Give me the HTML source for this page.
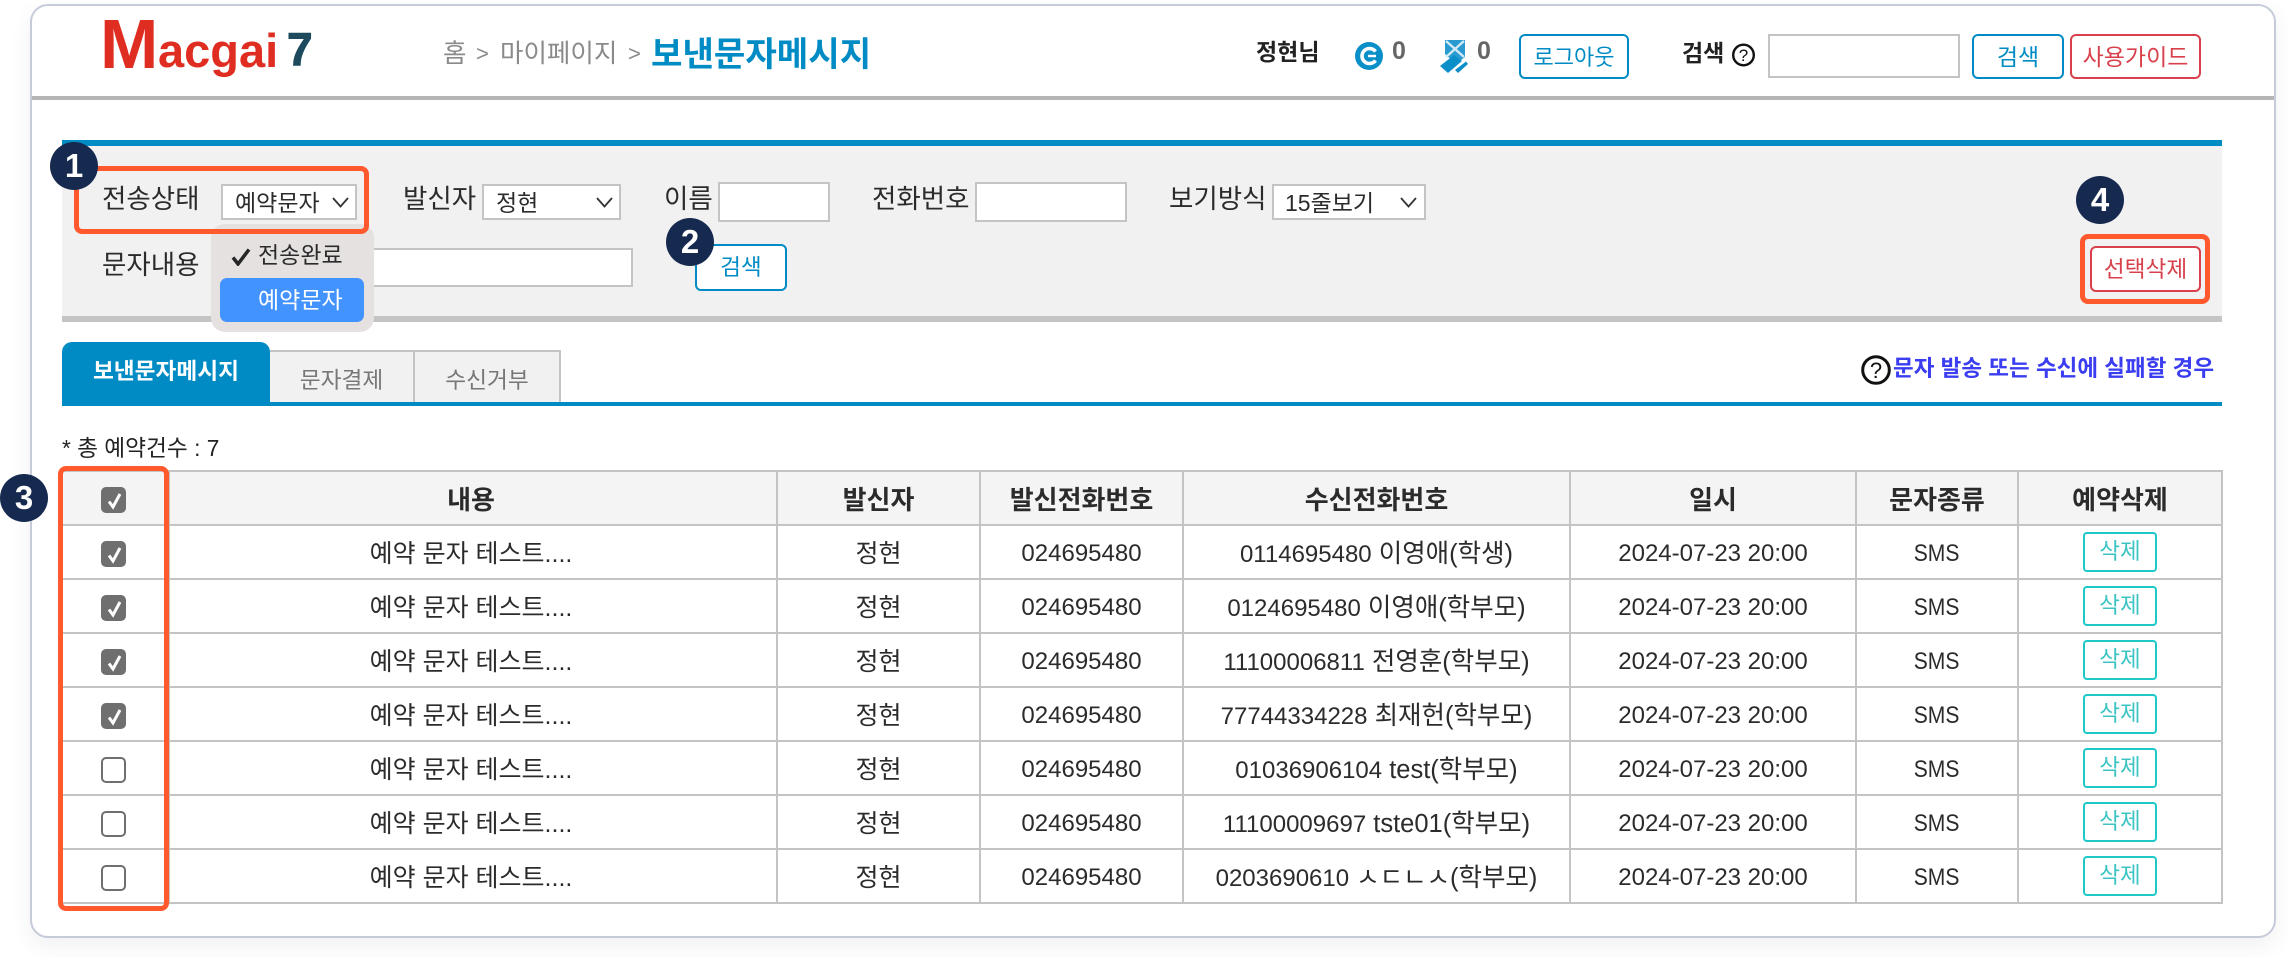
<!DOCTYPE html>
<html lang="ko">
<head>
<meta charset="utf-8">
<title>보낸문자메시지</title>
<style>
html,body{margin:0;padding:0;background:#fff;width:2288px;height:958px;overflow:hidden}
body{position:relative;font-family:"Liberation Sans","Noto Sans CJK KR",sans-serif;color:#2b2b2b}
.a{position:absolute;white-space:nowrap}
.t{position:absolute;white-space:nowrap;line-height:40px;height:40px}
.card{position:absolute;left:30px;top:4px;width:2242px;height:930px;border:2px solid #c6cbd9;border-radius:18px;background:#fff;box-shadow:0 8px 22px rgba(40,50,80,.07)}
.inp,.sel{position:absolute;box-sizing:border-box;background:#fff;border:2px solid #c4c4c4}
.btn{position:absolute;box-sizing:border-box;background:#fff;border-radius:6px;text-align:center;white-space:nowrap}
.bl{border:2px solid #008bc4;color:#008bc4}
.rd{border:2px solid #d8404c;color:#d8404c}
.o{position:absolute;box-sizing:border-box;border:5px solid #ff592d;border-radius:8px}
.badge{position:absolute;width:48px;height:48px;border-radius:50%;background:#152a4e;color:#fff;text-align:center;font-weight:700;font-size:33px;line-height:48px}
table{position:absolute;left:61px;top:470px;width:2160px;height:432px;border-collapse:collapse;table-layout:fixed;font-size:25px}
tr{height:54px}
td,th{box-sizing:border-box;border:2px solid #c4c4c4;padding:4px 0 0;text-align:center;height:54px;line-height:34px;white-space:nowrap;overflow:hidden}
th{background:#f4f4f4;font-weight:700;color:#2b2b2b;font-size:26px}
td.m,th.m{padding-right:4px}
td.d,td.s{padding-top:3px}
td.c{padding-top:5px}
td.d{font-size:24px}
td.s span{display:inline-block;font-size:24.500px;transform:scaleX(.86)}
td.c{font-size:25.500px}
td.c span{font-size:24px}
td.n{font-size:25px}
.cb{display:block;position:relative;top:0;left:-2px;box-sizing:border-box;width:25px;height:26px;margin:0 auto;border:2px solid #6f6f6f;border-radius:5px;background:#fff}
.cb.on{background:#6f6f6f}
.cb svg{display:block;margin:1px 0 0 1px}
.del{display:block;box-sizing:border-box;width:74px;height:40px;margin:-4px auto 0;border:2px solid #1cc8c8;border-radius:4px;color:#3cc4c4;font-size:22.500px;line-height:35px;background:#fff}
</style>
</head>
<body>
<div class="card"></div>
<div class="a" style="left:32px;top:96px;width:2242px;height:4px;background:#b5b5b5"></div>

<!-- logo -->
<div class="a" style="left:100px;top:4px;font-size:70px;line-height:80px;font-weight:700;color:#e02d21">M</div>
<div class="a" style="left:158px;top:21px;font-size:47px;line-height:60px;font-weight:700;color:#e02d21">acgai</div>
<div class="a" style="left:287px;top:19px;font-size:46px;line-height:60px;font-weight:700;color:#1d4a5c;-webkit-text-stroke:1px #1d4a5c">7</div>

<!-- breadcrumb -->
<div class="t" style="left:443px;top:34px;font-size:25.500px;color:#8a8a8a">홈</div>
<div class="t" style="left:476px;top:34px;font-size:22px;color:#8a8a8a">&gt;</div>
<div class="t" style="left:500px;top:34px;font-size:25.500px;color:#8a8a8a">마이페이지</div>
<div class="t" style="left:628px;top:34px;font-size:22px;color:#8a8a8a">&gt;</div>
<div class="t" style="left:651px;top:35px;font-size:34.200px;font-weight:700;color:#008bc4">보낸문자메시지</div>

<!-- header right -->
<div class="t" style="left:1256px;top:32px;font-size:23px;font-weight:700;color:#222">정현님</div>
<svg class="a" style="left:1355px;top:42px" width="28" height="28" viewBox="0 0 28 28"><circle cx="14" cy="14" r="14" fill="#0a8fc8"/><path d="M20.500 9.500A7.500 7.500 0 1 0 20.500 18.500" fill="none" stroke="#fff" stroke-width="3.600"/><path d="M13 14H21" stroke="#fff" stroke-width="2.400"/></svg>
<div class="t" style="left:1392px;top:31px;font-size:25px;font-weight:700;color:#666">0</div>
<svg class="a" style="left:1440px;top:40px" width="28" height="33" viewBox="0 0 28 33"><path d="M5 0H25V17L16 24L5 14Z" fill="#2a9bd0"/><path d="M6 1L24 17M24 1L6 17" stroke="#cfe9f5" stroke-width="2.400"/><path d="M0 26L14 15L22 21L8 33Z" fill="#0a8fc8"/><path d="M15 30L26 21.500L28 24L18 33Z" fill="#0a8fc8"/></svg>
<div class="t" style="left:1477px;top:31px;font-size:25px;font-weight:700;color:#666">0</div>
<div class="btn bl" style="left:1519px;top:34px;width:110px;height:45px;font-size:22px;line-height:43px">로그아웃</div>
<div class="t" style="left:1682px;top:33px;font-size:23px;font-weight:700;color:#222">검색</div>
<svg class="a" style="left:1732px;top:43px" width="23" height="24" viewBox="0 0 23 24"><circle cx="11.500" cy="12" r="10.300" fill="none" stroke="#111" stroke-width="2.400"/><text x="11.500" y="18" text-anchor="middle" font-size="17" font-family="Liberation Sans" fill="#111">?</text></svg>
<div class="inp" style="left:1768px;top:34px;width:192px;height:44px"></div>
<div class="btn bl" style="left:1972px;top:34px;width:92px;height:45px;font-size:23px;line-height:43px">검색</div>
<div class="btn rd" style="left:2070px;top:34px;width:131px;height:45px;font-size:23px;line-height:43px">사용가이드</div>

<!-- search panel -->
<div class="a" style="left:62px;top:140px;width:2160px;height:6px;background:#008bc4"></div>
<div class="a" style="left:62px;top:146px;width:2160px;height:170px;background:#f1f1f1"></div>
<div class="a" style="left:62px;top:316px;width:2160px;height:6px;background:#c4c4c4"></div>

<div class="t" style="left:102px;top:179px;font-size:26.500px">전송상태</div>
<div class="sel" style="left:221px;top:184px;width:136px;height:36px"></div>
<div class="t" style="left:235px;top:183px;font-size:23px">예약문자</div>
<svg class="a" style="left:332px;top:197px" width="17" height="11" viewBox="0 0 17 11"><path d="M1 1L8.500 9.500L16 1" fill="none" stroke="#333" stroke-width="1.800"/></svg>

<div class="t" style="left:403px;top:179px;font-size:26.500px">발신자</div>
<div class="sel" style="left:482px;top:184px;width:139px;height:36px"></div>
<div class="t" style="left:496px;top:183px;font-size:23px">정현</div>
<svg class="a" style="left:596px;top:197px" width="17" height="11" viewBox="0 0 17 11"><path d="M1 1L8.500 9.500L16 1" fill="none" stroke="#333" stroke-width="1.800"/></svg>

<div class="t" style="left:664px;top:179px;font-size:26.500px">이름</div>
<div class="inp" style="left:718px;top:182px;width:112px;height:40px"></div>

<div class="t" style="left:872px;top:179px;font-size:26.500px">전화번호</div>
<div class="inp" style="left:975px;top:182px;width:152px;height:40px"></div>

<div class="t" style="left:1169px;top:179px;font-size:26.500px">보기방식</div>
<div class="sel" style="left:1272px;top:184px;width:154px;height:36px"></div>
<div class="t" style="left:1285px;top:183px;font-size:23px">15줄보기</div>
<svg class="a" style="left:1400px;top:197px" width="17" height="11" viewBox="0 0 17 11"><path d="M1 1L8.500 9.500L16 1" fill="none" stroke="#333" stroke-width="1.800"/></svg>

<div class="t" style="left:102px;top:245px;font-size:26.500px">문자내용</div>
<div class="inp" style="left:221px;top:248px;width:412px;height:39px"></div>

<!-- dropdown -->
<div class="a" style="left:211px;top:224px;width:163px;height:108px;background:#e6e1e1;border-radius:14px"></div>
<div class="a" style="left:220px;top:278px;width:144px;height:44px;background:#4393ff;border-radius:7px"></div>
<svg class="a" style="left:231px;top:248px" width="20" height="18" viewBox="0 0 20 18"><path d="M2 9.500L7 16L18 1.500" fill="none" stroke="#262626" stroke-width="3.500"/></svg>
<div class="t" style="left:258px;top:235px;font-size:23px">전송완료</div>
<div class="t" style="left:258px;top:280px;font-size:23px;color:#fff">예약문자</div>

<div class="btn bl" style="left:695px;top:244px;width:92px;height:47px;font-size:22.500px;line-height:43px">검색</div>
<div class="btn rd" style="left:2090px;top:246px;width:111px;height:46px;font-size:22.700px;line-height:42px">선택삭제</div>

<!-- tabs -->
<div class="a" style="left:62px;top:402px;width:2160px;height:4px;background:#008bc4"></div>
<div class="a" style="left:62px;top:342px;width:208px;height:62px;background:#008bc4;border-radius:10px 10px 0 0;color:#fff;font-weight:700;font-size:22.700px;line-height:58px;text-align:center">보낸문자메시지</div>
<div class="a" style="left:270px;top:350px;width:145px;height:52px;box-sizing:border-box;background:#f1f1f1;border:2px solid #c4c4c4;border-left:0;border-bottom:0;color:#777;font-size:22.700px;line-height:57px;text-align:center">문자결제</div>
<div class="a" style="left:415px;top:350px;width:146px;height:52px;box-sizing:border-box;background:#f1f1f1;border:2px solid #c4c4c4;border-left:0;border-bottom:0;color:#777;font-size:22.700px;line-height:57px;text-align:center">수신거부</div>

<svg class="a" style="left:1861px;top:355px" width="30" height="30" viewBox="0 0 30 30"><circle cx="15" cy="15" r="13.300" fill="none" stroke="#111" stroke-width="3"/><text x="15" y="23" text-anchor="middle" font-size="22" font-family="Liberation Sans" fill="#111">?</text></svg>
<div class="t" style="left:1893px;top:349px;font-size:22.500px;font-weight:700;color:#3a3df0">문자 발송 또는 수신에 실패할 경우</div>

<div class="t" style="left:62px;top:428px;font-size:22.700px;color:#222">* 총 예약건수 : 7</div>

<!-- table -->
<table>
<colgroup><col style="width:107px"><col style="width:608px"><col style="width:203px"><col style="width:203px"><col style="width:387px"><col style="width:286px"><col style="width:162px"><col style="width:204px"></colgroup>
<tr><th><span class="cb on"><svg width="21" height="22" viewBox="0 0 21 22"><path d="M5 11.500L9 17L16 4" fill="none" stroke="#fff" stroke-width="3"/></svg></span></th><th class="m">내용</th><th>발신자</th><th>발신전화번호</th><th>수신전화번호</th><th>일시</th><th>문자종류</th><th>예약삭제</th></tr>
<tr><td><span class="cb on"><svg width="21" height="22" viewBox="0 0 21 22"><path d="M5 11.500L9 17L16 4" fill="none" stroke="#fff" stroke-width="3"/></svg></span></td><td class="m">예약 문자 테스트....</td><td class="n">정현</td><td class="d">024695480</td><td class="c"><span>0114695480</span> 이영애(학생)</td><td class="d">2024-07-23 20:00</td><td class="s"><span>SMS</span></td><td><span class="del">삭제</span></td></tr>
<tr><td><span class="cb on"><svg width="21" height="22" viewBox="0 0 21 22"><path d="M5 11.500L9 17L16 4" fill="none" stroke="#fff" stroke-width="3"/></svg></span></td><td class="m">예약 문자 테스트....</td><td class="n">정현</td><td class="d">024695480</td><td class="c"><span>0124695480</span> 이영애(학부모)</td><td class="d">2024-07-23 20:00</td><td class="s"><span>SMS</span></td><td><span class="del">삭제</span></td></tr>
<tr><td><span class="cb on"><svg width="21" height="22" viewBox="0 0 21 22"><path d="M5 11.500L9 17L16 4" fill="none" stroke="#fff" stroke-width="3"/></svg></span></td><td class="m">예약 문자 테스트....</td><td class="n">정현</td><td class="d">024695480</td><td class="c"><span>11100006811</span> 전영훈(학부모)</td><td class="d">2024-07-23 20:00</td><td class="s"><span>SMS</span></td><td><span class="del">삭제</span></td></tr>
<tr><td><span class="cb on"><svg width="21" height="22" viewBox="0 0 21 22"><path d="M5 11.500L9 17L16 4" fill="none" stroke="#fff" stroke-width="3"/></svg></span></td><td class="m">예약 문자 테스트....</td><td class="n">정현</td><td class="d">024695480</td><td class="c"><span>77744334228</span> 최재헌(학부모)</td><td class="d">2024-07-23 20:00</td><td class="s"><span>SMS</span></td><td><span class="del">삭제</span></td></tr>
<tr><td><span class="cb"></span></td><td class="m">예약 문자 테스트....</td><td class="n">정현</td><td class="d">024695480</td><td class="c"><span>01036906104</span> test(학부모)</td><td class="d">2024-07-23 20:00</td><td class="s"><span>SMS</span></td><td><span class="del">삭제</span></td></tr>
<tr><td><span class="cb"></span></td><td class="m">예약 문자 테스트....</td><td class="n">정현</td><td class="d">024695480</td><td class="c"><span>11100009697</span> tste01(학부모)</td><td class="d">2024-07-23 20:00</td><td class="s"><span>SMS</span></td><td><span class="del">삭제</span></td></tr>
<tr><td><span class="cb"></span></td><td class="m">예약 문자 테스트....</td><td class="n">정현</td><td class="d">024695480</td><td class="c"><span>0203690610</span> ㅅㄷㄴㅅ(학부모)</td><td class="d">2024-07-23 20:00</td><td class="s"><span>SMS</span></td><td><span class="del">삭제</span></td></tr>
</table>

<!-- annotations -->
<div class="o" style="left:74px;top:166px;width:295px;height:68px"></div>
<div class="o" style="left:2080px;top:234px;width:130px;height:70px"></div>
<div class="o" style="left:58px;top:466px;width:111px;height:445px"></div>
<div class="badge" style="left:50px;top:142px">1</div>
<div class="badge" style="left:666px;top:218px">2</div>
<div class="badge" style="left:0;top:474px">3</div>
<div class="badge" style="left:2076px;top:176px">4</div>
</body>
</html>
